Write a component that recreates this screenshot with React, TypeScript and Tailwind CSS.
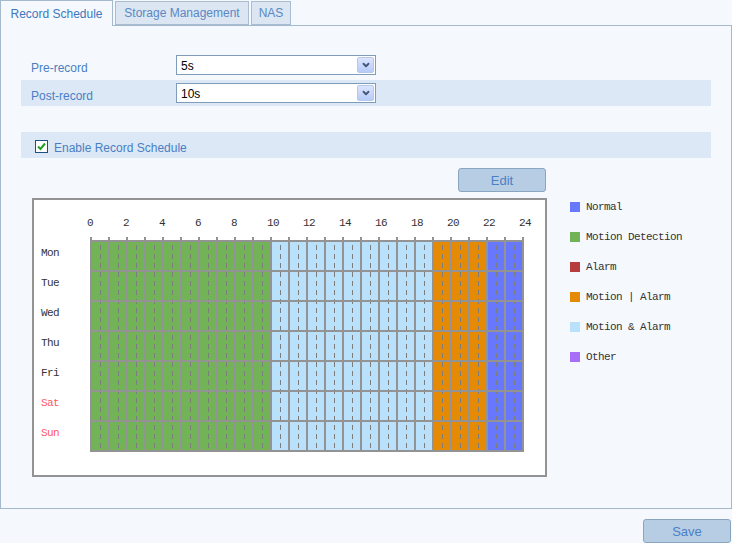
import { ChevronDown } from 'lucide-react';

const DAYS = ['Mon', 'Tue', 'Wed', 'Thu', 'Fri', 'Sat', 'Sun'];

// hour ranges and their colours, the same for each day
const SEGMENTS = [
  { from: 0, to: 10, color: '#72b357' },
  { from: 10, to: 19, color: '#b9e1fb' },
  { from: 19, to: 22, color: '#e48a04' },
  { from: 22, to: 24, color: '#6878fd' },
];

const LEGEND = [
  { label: 'Normal', color: '#6878fd' },
  { label: 'Motion Detection', color: '#72b357' },
  { label: 'Alarm', color: '#b73d3d' },
  { label: 'Motion | Alarm', color: '#e48a04' },
  { label: 'Motion & Alarm', color: '#b9e1fb' },
  { label: 'Other', color: '#a86ef8' },
];

const GX = 56; // grid left inside the box
const GY = 41; // grid top
const HW = 18; // px per hour
const RH = 30; // row height

function Select({ value }: { value: string }) {
  return (
    <div className="w-[200px] h-[20px] bg-white border border-[#7f9db9] flex items-center justify-between pl-[4px] pr-[1px]">
      <span className="text-[12px] text-black pt-[1px]">{value}</span>
      <span className="w-[17px] h-[16px] rounded-[2px] border border-[#b7c8ef] bg-gradient-to-b from-[#dbe5fd] to-[#b7cbf8] flex items-center justify-center">
        <ChevronDown className="w-[10px] h-[10px] text-[#44567c]" strokeWidth={4.5} />
      </span>
    </div>
  );
}

function ScheduleChart() {
  const gridW = HW * 24;
  const gridH = RH * 7;
  return (
    <svg width={511} height={275} className="block">
      {/* hour labels */}
      {Array.from({ length: 13 }, (_, i) => i * 2).map((h) => (
        <text
          key={h}
          x={GX + HW * h - 3}
          y={26}
          fontSize={11}
          fontFamily="'Liberation Mono', monospace"
          fill="#333"
          letterSpacing={-0.6}
        >
          {h}
        </text>
      ))}

      {/* day labels */}
      {DAYS.map((d, i) => (
        <text
          key={d}
          x={7}
          y={GY + RH * i + 15}
          fontSize={11}
          fontFamily="'Liberation Mono', monospace"
          fill={i >= 5 ? '#ff5a5a' : '#333'}
          letterSpacing={-0.6}
        >
          {d}
        </text>
      ))}

      {/* cells */}
      {SEGMENTS.map((s) => (
        <rect
          key={s.from}
          x={GX + HW * s.from}
          y={GY}
          width={HW * (s.to - s.from)}
          height={gridH}
          fill={s.color}
        />
      ))}

      {/* half-hour dashes */}
      {Array.from({ length: 24 }, (_, h) => (
        <line
          key={`d${h}`}
          x1={GX + HW * h + 10.5}
          x2={GX + HW * h + 10.5}
          y1={GY + 4}
          y2={GY + gridH}
          stroke="#7d7d7d"
          strokeWidth={1}
          strokeDasharray="5 4"
        />
      ))}

      {/* row lines */}
      {Array.from({ length: 8 }, (_, i) => (
        <rect key={`r${i}`} x={GX} y={GY + RH * i - 1} width={gridW + 2} height={2} fill="#939393" />
      ))}

      {/* hour lines with ticks */}
      {Array.from({ length: 25 }, (_, h) => (
        <rect key={`h${h}`} x={GX + HW * h} y={GY - 4} width={2} height={gridH + 4} fill="#939393" />
      ))}
    </svg>
  );
}

export default function App() {
  return (
    <div
      className="w-[732px] h-[543px] bg-[#f5f9fd] overflow-hidden"
      style={{ fontFamily: "'Liberation Sans', Arial, sans-serif" }}
    >
      {/* Tabs */}
      <div className="flex items-start gap-[2px] h-[25px]">
        <div className="relative z-10 w-[113px] h-[26px] border border-b-0 border-[#a5b9cc] bg-[#f5f9fd] flex items-center justify-center text-[12px] text-[#3b78bd] pt-[1px]">
          Record Schedule
        </div>
        <div className="mt-[1px] w-[134px] h-[24px] border border-[#a8bdd2] bg-[#dbe6f2] flex items-center justify-center text-[12px] text-[#5a88c4]">
          Storage Management
        </div>
        <div className="mt-[1px] w-[40px] h-[24px] border border-[#a8bdd2] bg-[#dbe6f2] flex items-center justify-center text-[12px] text-[#5a88c4]">
          NAS
        </div>
      </div>

      {/* Panel */}
      <div className="h-[484px] border border-[#a5b9cc]">
        <div className="mx-[20px] mt-[26px]">
          <div className="flex items-center h-[26px] pl-[10px]">
            <span className="w-[145px] text-[12px] text-[#4a7fc4] pt-[5px]">Pre-record</span>
            <Select value="5s" />
          </div>
          <div className="flex items-center h-[26px] mt-[2px] pl-[10px] bg-[#dce8f5]">
            <span className="w-[145px] text-[12px] text-[#4a7fc4] pt-[5px]">Post-record</span>
            <Select value="10s" />
          </div>

          <div className="flex items-center gap-[6px] h-[26px] mt-[26px] pl-[14px] bg-[#dce8f5]">
            <span className="mt-[2px] w-[13px] h-[13px] border border-[#1c5180] bg-white flex items-center justify-center">
              <svg width="9" height="9" viewBox="0 0 9 9">
                <path d="M1 4.5 L3.5 7 L8 1.5" fill="none" stroke="#21a121" strokeWidth="2" />
              </svg>
            </span>
            <span className="text-[12px] text-[#4a7fc4] pt-[5px]">Enable Record Schedule</span>
          </div>
        </div>

        <div className="flex mt-[10px] ml-[31px]">
          <div className="w-[515px]">
            <div className="flex justify-end pr-[1px]">
              <button className="w-[88px] h-[24px] rounded-[3px] border border-[#8aa5c0] bg-[#b7cde3] text-[13px] text-[#4a80c8] pt-[1px]">
                Edit
              </button>
            </div>
            <div className="mt-[6px] h-[279px] border-2 border-[#939393] bg-white">
              <ScheduleChart />
            </div>
          </div>

          <div
            className="ml-[23px] mt-[34px] flex flex-col gap-[20px]"
            style={{ fontFamily: "'Liberation Mono', monospace" }}
          >
            {LEGEND.map((l) => (
              <div key={l.label} className="flex items-center h-[10px]">
                <span className="w-[10px] h-[10px]" style={{ backgroundColor: l.color }} />
                <span className="ml-[6px] text-[11px] tracking-[-0.6px] text-[#333] leading-[10px] whitespace-pre">
                  {l.label}
                </span>
              </div>
            ))}
          </div>
        </div>
      </div>

      <div className="flex justify-end mt-[10px] pr-[1px]">
        <button className="w-[88px] h-[24px] rounded-[3px] border border-[#8aa5c0] bg-[#b7cde3] text-[13px] text-[#4a80c8] pt-[1px]">
          Save
        </button>
      </div>
    </div>
  );
}
